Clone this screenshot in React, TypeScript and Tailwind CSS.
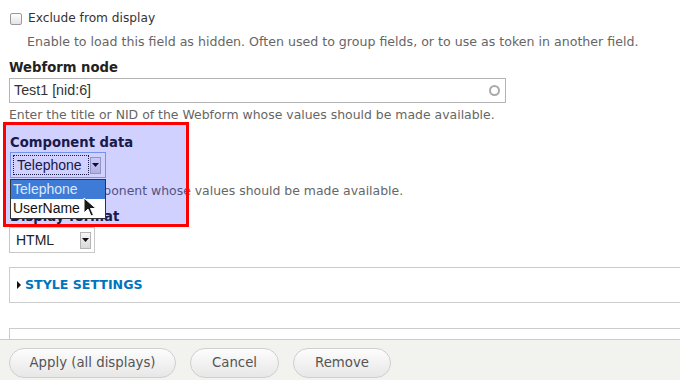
import React from "react";

const sans = { fontFamily: '"DejaVu Sans", sans-serif' };
const arial = { fontFamily: '"Liberation Sans", Arial, sans-serif' };

function Arrow() {
  return (
    <span className="flex h-[17px] w-[11px] items-center justify-center border border-[#b5b5b5] bg-gradient-to-b from-[#f6f6f6] to-[#d9d9d9]">
      <svg width="7" height="4" viewBox="0 0 7 4">
        <path d="M0 0h7L3.5 4z" fill="#111" />
      </svg>
    </span>
  );
}

function Cursor() {
  return (
    <svg width="14" height="20" viewBox="0 0 14 20" className="absolute left-[83px] top-[197px]">
      <path d="M1 1v15l4-4 3 7 2.5-1-3-6.5H13z" fill="#1a1a1a" stroke="#fff" strokeWidth="1" />
    </svg>
  );
}

export default function App() {
  return (
    <div className="relative h-[380px] w-[680px] overflow-hidden bg-white text-[#333]" style={sans}>
      <div className="px-[9px]">
        {/* exclude checkbox */}
        <div className="flex items-center gap-[6px] pt-[11px] pl-[1px]">
          <span className="h-[12px] w-[12px] rounded-[2px] border border-[#9a9a9a] bg-gradient-to-b from-white to-[#e4e4e4]" />
          <span className="text-[12.2px] leading-[15px]">Exclude from display</span>
        </div>
        <p className="mt-[9px] pl-[18px] text-[12.6px] leading-[14px] text-[#666]">
          Enable to load this field as hidden. Often used to group fields, or to use as token in another field.
        </p>

        {/* webform node */}
        <div className="mt-[11px] text-[13.2px] font-bold leading-[16px] text-[#222]">Webform node</div>
        <div className="mt-[2px] flex h-[25px] w-[497px] items-center justify-between border border-[#b4b4b4] pl-[4px] pr-[4px]">
          <span className="text-[14.3px] text-[#333]" style={arial}>
            Test1 [nid:6]
          </span>
          <span className="mr-[1px] h-[11px] w-[11px] rounded-full border-2 border-[#aaa]" />
        </div>
        <p className="mt-[5px] text-[12.45px] leading-[14px] text-[#666]">
          Enter the title or NID of the Webform whose values should be made available.
        </p>

        {/* component data */}
        <div className="mt-[13px] pl-[1px] text-[13.2px] font-bold leading-[16px] text-[#222]">Component data</div>
        <div className="ml-[1px] mt-[1px] flex h-[26px] w-[96px] items-center border border-[#8fb3e8] pl-[2px] pr-[4px]">
          <span className="flex h-[20px] flex-1 items-center border border-dotted border-[#222] pl-[3px] text-[14px] text-[#222]" style={arial}>
            Telephone
          </span>
          <span className="ml-[1px]"><Arrow /></span>
        </div>
        <p className="mt-[6px] pl-[1px] text-[12.45px] leading-[14px] text-[#666]">
          Select the component whose values should be made available.
        </p>

        {/* display format */}
        <div className="mt-[11px] pl-[1px] text-[13.2px] font-bold leading-[16px] text-[#222]">Display format</div>
        <div className="mt-[2px] flex h-[26px] w-[86px] items-center justify-between border border-[#c8c8c8] pl-[6px] pr-[3px]">
          <span className="text-[14px] text-[#222]" style={arial}>HTML</span>
          <Arrow />
        </div>

        {/* style settings */}
        <div className="mt-[14px] -mr-[9px] flex h-[36px] items-center border border-r-0 border-[#ccc] pl-[7px]">
          <svg width="4" height="8" viewBox="0 0 4 8" className="mr-[4px]">
            <path d="M0 0l4 4-4 4z" fill="#111" />
          </svg>
          <span className="text-[12.6px] font-bold text-[#0074bd]">STYLE SETTINGS</span>
        </div>
        <div className="mt-[25px] -mr-[9px] h-[20px] border border-r-0 border-[#ccc]" />
      </div>

      {/* button bar */}
      <div className="absolute bottom-0 left-0 right-0 flex h-[41px] items-start gap-[14px] border-t border-[#ccc] bg-[#f2f2ee] pl-[9px] pt-[8px]">
        {["Apply (all displays)", "Cancel", "Remove"].map((b, i) => (
          <button
            key={b}
            className={`h-[30px] rounded-full border border-[#cfcfcf] bg-gradient-to-b from-[#fdfdfd] to-[#e7e7e7] text-[13.3px] text-[#555] ${
              i === 0 ? "w-[167px]" : i === 1 ? "w-[89px]" : "w-[98px]"
            }`}
          >
            {b}
          </button>
        ))}
      </div>

      {/* highlight overlay */}
      <div className="absolute left-[3px] top-[122px] h-[105px] w-[186px] border-[3px] border-[#f00] bg-[rgba(0,0,255,0.18)]" />

      {/* open dropdown */}
      <div className="absolute left-[10px] top-[179px] w-[96px] border border-[#333] bg-white text-[14px]" style={arial}>
        <div className="h-[19px] bg-[#3d7bd6] pl-[2px] leading-[19px] text-[#dde8fb]">Telephone</div>
        <div className="h-[19px] pl-[2px] leading-[19px] text-[#111]">UserName</div>
      </div>
      <Cursor />
    </div>
  );
}
